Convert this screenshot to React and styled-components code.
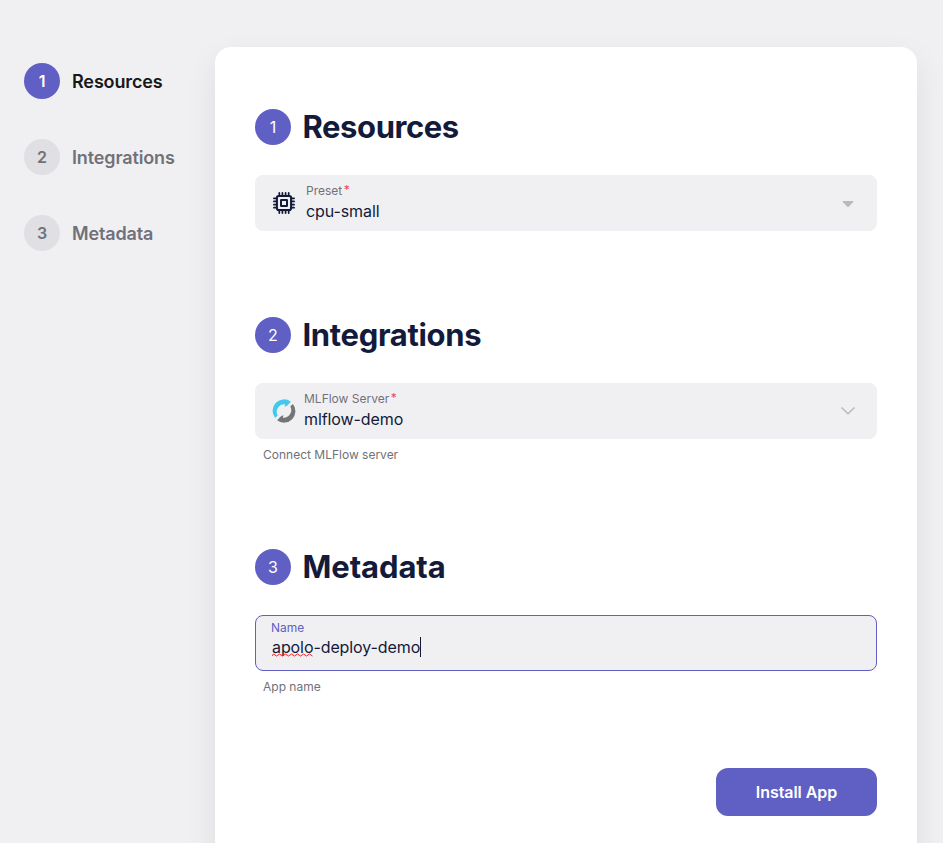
import React from "react";
import styled, { createGlobalStyle } from "styled-components";

const GlobalStyle = createGlobalStyle`
  * { box-sizing: border-box; }
  body {
    margin: 0;
    background: #f0f0f2;
    color: #131a3a;
    font-family: Inter, sans-serif;
    overflow: hidden;
  }
`;

const Page = styled.div`
  display: flex;
  align-items: flex-start;
  height: 843px;
  overflow: hidden;
`;

const Sidebar = styled.nav`
  display: flex;
  flex-direction: column;
  gap: 40px;
  width: 215px;
  padding: 63px 0 0 24px;
`;

const Step = styled.div`
  display: flex;
  align-items: center;
  gap: 12px;
  height: 36px;
  font-size: 18px;
  line-height: 28px;
  font-weight: 600;
  letter-spacing: -0.14px;
  color: ${(p) => (p.$active ? "#18181b" : "#71717a")};
`;

const StepName = styled.span`
  padding-top: 2px;
`;

const Circle = styled.span`
  display: flex;
  align-items: center;
  justify-content: center;
  flex: none;
  width: 36px;
  height: 36px;
  border-radius: 50%;
  font-size: 16px;
  line-height: 24px;
  font-weight: ${(p) => p.$weight};
  background: ${(p) => (p.$muted ? "#e0e0e4" : "#605fc4")};
  color: ${(p) => (p.$muted ? "#71717a" : "#fff")};
`;

const Card = styled.main`
  width: 702px;
  height: 900px;
  margin-top: 47px;
  padding: 62px 40px 0;
  border-radius: 16px;
  background: #fff;
  box-shadow: 0 12px 32px rgba(0, 0, 0, 0.08);
`;

const Section = styled.section`
  height: ${(p) => p.$height}px;
`;

const Heading = styled.header`
  display: flex;
  align-items: center;
  gap: 11.5px;
  height: 36px;
  margin-bottom: 30px;
`;

const Title = styled.h2`
  margin: 0;
  font-size: 31px;
  line-height: 36px;
  font-weight: 700;
  letter-spacing: ${(p) => p.$tracking}px;
`;

const Field = styled.div`
  display: flex;
  align-items: center;
  height: 56px;
  padding: 0 16px;
  border-radius: 8px;
  background: #f0f0f2;
`;

const IconSlot = styled.span`
  display: flex;
  justify-content: center;
  width: 26px;
  margin-right: ${(p) => p.$gap}px;
`;

const FieldText = styled.div`
  flex: 1;
  height: 56px;
  padding-top: 8px;
`;

const Label = styled.div`
  display: flex;
  font-size: 12px;
  line-height: 16px;
  color: #71717a;
`;

const Required = styled.span`
  height: 14px;
  margin-left: 1.5px;
  line-height: 14px;
  color: #f3445a;
`;

const Value = styled.div`
  font-size: 16px;
  line-height: 24px;
  letter-spacing: -0.09px;
`;

const Arrow = styled.span`
  display: flex;
  justify-content: center;
  width: 26px;
`;

const InputBox = styled.div`
  height: 56px;
  padding: 4px 15px;
  border: 1px solid #605fc4;
  border-radius: 8px;
  background: #f0f0f2;
`;

const InputLabel = styled(Label)`
  color: #605fc4;
`;

const InputValue = styled.div`
  display: flex;
  align-items: center;
  height: 22px;
  padding-left: 1px;
  font-size: 16px;
  line-height: 22px;
  letter-spacing: -0.09px;
`;

const Misspelled = styled.span`
  position: relative;
`;

const Squiggle = styled.svg`
  position: absolute;
  left: 0;
  top: 17px;
`;

const Caret = styled.span`
  width: 1px;
  height: 20px;
  background: #131a3a;
`;

const Hint = styled.div`
  margin: 8px 0 0 8px;
  font-size: 12px;
  line-height: 16px;
  color: #71717a;
`;

const Actions = styled.footer`
  display: flex;
  justify-content: flex-end;
`;

const Button = styled.button`
  width: 161px;
  height: 48px;
  padding: 0;
  border: 0;
  border-radius: 12px;
  background: #605fc4;
  color: #fff;
  font: 600 16px/24px Inter, sans-serif;
  letter-spacing: -0.04px;
`;

const CpuIcon = () => (
  <svg width="24" height="24" viewBox="0 0 24 24" fill="none" stroke="#131a3a">
    <rect x="4.9" y="4.9" width="14.2" height="14.2" rx="1.8" strokeWidth="2" />
    <rect x="9" y="9" width="6" height="6" rx="0.3" strokeWidth="2" />
    <path
      strokeWidth="1.75"
      strokeLinecap="round"
      d="M7.300 1.900v3M10.400 1.900v3M13.600 1.900v3M16.700 1.900v3M7.300 19v3.100M10.400 19v3.100M13.600 19v3.100M16.700 19v3.100M1.900 7.300h3M1.900 10.400h3M1.900 13.600h3M1.900 16.700h3M19 7.300h3.100M19 10.400h3.100M19 13.600h3.100M19 16.700h3.100"
    />
  </svg>
);

const MlflowIcon = () => (
  <svg width="24" height="24" viewBox="0 0 24 24">
    <path fill="#43c9ed" d="M3.100 18.900A11.400 11.400 0 0 1 18.900 2.700L15.600 6.300 12.600 7.900l.5-2.600A7.600 7.600 0 0 0 5.700 16.500z" />
    <path fill="#737577" d="M20.900 5.100A11.400 11.400 0 0 1 5.100 21.300L8.400 17.700 11.400 16.100l-.5 2.600A7.600 7.600 0 0 0 18.300 7.500z" />
  </svg>
);

const steps = ["Resources", "Integrations", "Metadata"];

const SectionHeading = ({ number, title, tracking }) => (
  <Heading>
    <Circle $weight={400}>{number}</Circle>
    <Title $tracking={tracking}>{title}</Title>
  </Heading>
);

export default function App() {
  return (
    <>
      <GlobalStyle />
      <Page>
        <Sidebar>
          {steps.map((name, i) => (
            <Step key={name} $active={i === 0}>
              <Circle $weight={600} $muted={i > 0}>{i + 1}</Circle>
              <StepName>{name}</StepName>
            </Step>
          ))}
        </Sidebar>
        <Card>
          <Section $height={208}>
            <SectionHeading number={1} title="Resources" tracking={-0.42} />
            <Field>
              <IconSlot $gap={9}><CpuIcon /></IconSlot>
              <FieldText>
                <Label>Preset<Required>*</Required></Label>
                <Value>cpu-small</Value>
              </FieldText>
              <Arrow>
                <svg width="12" height="8" viewBox="0 0 12 8">
                  <path d="M0.700 2h10.600v1L7 7.500q-1 .8-2 0L.7 3z" fill="#b9b9be" />
                </svg>
              </Arrow>
            </Field>
          </Section>
          <Section $height={232}>
            <SectionHeading number={2} title="Integrations" tracking={-0.33} />
            <Field>
              <IconSlot $gap={7}><MlflowIcon /></IconSlot>
              <FieldText>
                <Label>MLFlow Server<Required>*</Required></Label>
                <Value>mlflow-demo</Value>
              </FieldText>
              <Arrow>
                <svg width="16" height="10" viewBox="0 0 16 10" fill="none">
                  <path d="M1.500 1.500L8 7.800l6.500-6.300" stroke="#b9b9be" strokeWidth="1.500" />
                </svg>
              </Arrow>
            </Field>
            <Hint>Connect MLFlow server</Hint>
          </Section>
          <Section $height={219}>
            <SectionHeading number={3} title="Metadata" tracking={-0.1} />
            <InputBox>
              <InputLabel>Name</InputLabel>
              <InputValue>
                <Misspelled>
                  apolo
                  <Squiggle width="42" height="4" viewBox="0 0 42 4" fill="none">
                    <path
                      d="M0 3l1.500-2 3 2 3-2 3 2 3-2 3 2 3-2 3 2 3-2 3 2 3-2 3 2 3-2 3 2"
                      stroke="#ff2020"
                    />
                  </Squiggle>
                </Misspelled>
                -deploy-demo
                <Caret />
              </InputValue>
            </InputBox>
            <Hint>App name</Hint>
          </Section>
          <Actions>
            <Button>Install App</Button>
          </Actions>
        </Card>
      </Page>
    </>
  );
}
